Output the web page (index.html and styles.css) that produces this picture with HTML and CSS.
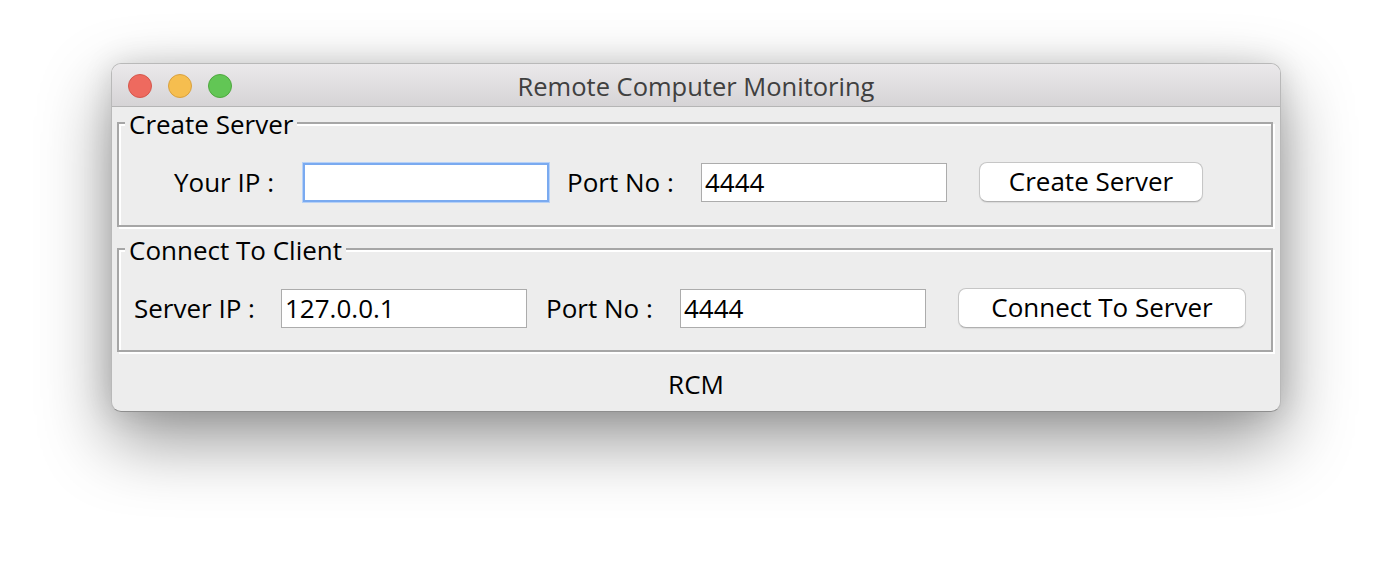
FILE: index.html
```html
<!DOCTYPE html>
<html>
<head>
<meta charset="utf-8">
<title>Remote Computer Monitoring</title>
<link rel="stylesheet" href="styles.css">
</head>
<body>
<div class="stage">
  <div class="window">
    <div class="titlebar">
      <div class="lights">
        <span class="light red"></span>
        <span class="light yellow"></span>
        <span class="light green"></span>
      </div>
      <div class="title">Remote Computer Monitoring</div>
      <div></div>
    </div>
    <div class="content">
      <div class="group group-server">
        <span class="legend">Create Server</span>
        <div class="row">
          <span class="label label-yourip">Your IP :</span>
          <div class="field focused"></div>
          <span class="label label-port">Port No :</span>
          <div class="field">4444</div>
          <button class="btn btn-create">Create Server</button>
        </div>
      </div>
      <div class="group group-client">
        <span class="legend">Connect To Client</span>
        <div class="row">
          <span class="label label-serverip">Server IP :</span>
          <div class="field">127.0.0.1</div>
          <span class="label label-port">Port No :</span>
          <div class="field">4444</div>
          <button class="btn btn-connect">Connect To Server</button>
        </div>
      </div>
      <div class="footer">RCM</div>
    </div>
  </div>
</div>
</body>
</html>
```

FILE: styles.css
```css
html, body {
  margin: 0;
  padding: 0;
  background: #ffffff;
}

body {
  font-family: "Open Sans", "DejaVu Sans", sans-serif;
  font-size: 26px;
  line-height: 30px;
  color: #000;
}

.stage {
  padding: 63px 0 0 111px;
  height: 509px;
  overflow: hidden;
}

.window {
  width: 1170px;
  height: 349px;
  box-sizing: border-box;
  border: 1px solid #b9b9b9;
  border-bottom-color: #8e8e8e;
  border-radius: 10px;
  background: #ededed;
  box-shadow: 0 28px 70px rgba(0, 0, 0, 0.42), 0 0 30px rgba(0, 0, 0, 0.12);
  display: flex;
  flex-direction: column;
  overflow: hidden;
}

.titlebar {
  height: 43px;
  flex: none;
  box-sizing: border-box;
  border-bottom: 1px solid #b5b5b5;
  background: linear-gradient(#ebe9eb, #d6d4d6);
  display: grid;
  grid-template-columns: 1fr auto 1fr;
  align-items: center;
}

.lights {
  display: flex;
  gap: 16px;
  padding-left: 16px;
  padding-top: 1px;
}

.light {
  width: 22px;
  height: 22px;
  border-radius: 50%;
  border: 1px solid;
}

.red { background: #ee6a5f; border-color: #d5574c; }
.yellow { background: #f6be4f; border-color: #d9a13f; }
.green { background: #62c655; border-color: #4fa83f; }

.title {
  color: #404040;
  font-size: 25.5px;
  padding-top: 2px;
}

.content {
  flex: 1;
  display: flex;
  flex-direction: column;
  padding: 0 5px;
}

.group {
  position: relative;
  box-sizing: border-box;
  border: 2px solid #a6a6a6;
  box-shadow: inset 2px 2px 0 #ffffff, 2px 2px 0 #ffffff;
  width: 1156px;
  flex: none;
}

.group-server {
  margin-top: 15px;
  height: 105px;
}

.group-client {
  margin-top: 21px;
  height: 104px;
}

.legend {
  position: absolute;
  top: -15px;
  left: 6px;
  padding: 0 4px;
  background: #ededed;
  white-space: nowrap;
}

.row {
  display: flex;
  align-items: center;
  height: 40px;
  margin-top: 38px;
}

.group-server .row { padding-left: 55px; }
.group-client .row { padding-left: 15px; }

.label {
  white-space: nowrap;
  flex: none;
}

.label-yourip { width: 129px; }
.label-serverip { width: 147px; }
.label-port { width: 134px; margin-left: 18px; }
.group-client .label-port { margin-left: 19px; }

.field {
  flex: none;
  box-sizing: border-box;
  width: 246px;
  height: 39px;
  background: #ffffff;
  border: 1px solid #acacac;
  padding: 0 3px;
  line-height: 36px;
  white-space: nowrap;
}

.field.focused {
  border: 2px solid #7aaaf0;
  box-shadow: 0 0 0 1px #b6d1f7;
}

.btn {
  flex: none;
  font: inherit;
  color: #000;
  height: 40px;
  box-sizing: border-box;
  background: #ffffff;
  border: 1px solid #c6c6c6;
  border-bottom-color: #b0b0b0;
  border-radius: 8px;
  box-shadow: 0 1px 1px rgba(0, 0, 0, 0.08);
  margin-left: 32px;
  padding: 0 0 2px;
  line-height: 34px;
}

.btn-create { width: 224px; }
.btn-connect { width: 288px; }

.footer {
  flex: 1;
  text-align: center;
  padding-top: 17px;
}
```
